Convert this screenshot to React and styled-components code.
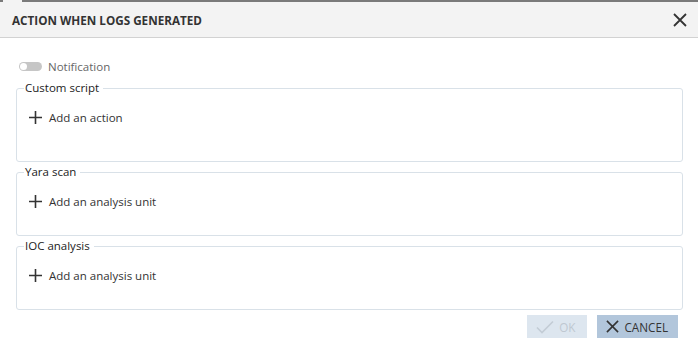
import React from "react";
import styled, { createGlobalStyle } from "styled-components";

const Global = createGlobalStyle`
  html, body { margin: 0; padding: 0; background: #fff; }
  body { font-family: "Open Sans", "Noto Sans", Arial, sans-serif; }
  #root { width: 698px; height: 360px; }
`;

const Dialog = styled.div`
  width: 698px;
  height: 360px;
  display: flex;
  flex-direction: column;
  background: #fff;
  box-sizing: border-box;
`;

const TopEdge = styled.div`
  display: flex;
  height: 2px;
  background: #f3f3f3;
`;

const EdgeSeg = styled.div`
  height: 2px;
  background: #7a7a7a;
  width: ${(p) => (p.$w ? `${p.$w}px` : "auto")};
  flex: ${(p) => (p.$w ? "none" : "1")};
  margin-left: ${(p) => p.$ml || 0}px;
`;

const Header = styled.div`
  height: 35px;
  background: #f3f3f3;
  border-bottom: 1px solid #d2d2d2;
  display: flex;
  align-items: center;
  justify-content: space-between;
  padding: 0 10px 0 12px;
`;

const Title = styled.div`
  font-size: 11.7px;
  font-weight: 700;
  color: #333;
`;

const Close = styled.button`
  border: 0;
  background: transparent;
  padding: 0;
  width: 16px;
  height: 16px;
  display: flex;
  align-items: center;
  justify-content: center;
  cursor: pointer;
`;

const Body = styled.div`
  display: flex;
  flex-direction: column;
  padding: 20px 16px 0 16px;
`;

const ToggleRow = styled.div`
  display: flex;
  align-items: center;
  gap: 6px;
  padding-left: 3px;
  height: 16px;
  font-size: 11.5px;
  color: #666;
`;

const Toggle = styled.div`
  width: 23px;
  height: 9px;
  border-radius: 5px;
  background: #c6c6c6;
  display: flex;
  align-items: center;
  padding-left: 1px;
  box-sizing: border-box;
`;

const Knob = styled.div`
  width: 7px;
  height: 7px;
  border-radius: 50%;
  background: #fff;
`;

const Group = styled.fieldset`
  margin: ${(p) => p.$mt}px 0 0 0;
  padding: 0 0 ${(p) => p.$pb}px 12px;
  border: 1px solid #d9e1e8;
  border-radius: 3px;
  box-sizing: border-box;
  width: 667px;
  min-width: 0;
`;

const Legend = styled.legend`
  font-size: 11.5px;
  color: #222;
  padding: 0 4px 0 1px;
  margin-left: -5px;
  line-height: 14px;
`;

const AddRow = styled.div`
  display: flex;
  align-items: center;
  gap: 7px;
  height: 17px;
  margin-top: 14px;
  font-size: 11.5px;
  color: #333;
  cursor: pointer;
`;

const Footer = styled.div`
  display: flex;
  justify-content: flex-end;
  gap: 10px;
  padding: 5px 20px 0 0;
`;

const Btn = styled.button`
  height: 23px;
  border: 0;
  border-radius: 0;
  display: flex;
  align-items: center;
  gap: 5px;
  padding: 0 ${(p) => p.$pr}px 0 ${(p) => p.$pl}px;
  font-family: inherit;
  font-size: 11.7px;
  background: ${(p) => (p.$disabled ? "#dde6ef" : "#b2c6db")};
  color: ${(p) => (p.$disabled ? "#bfc8d1" : "#333")};
  cursor: ${(p) => (p.$disabled ? "default" : "pointer")};
`;

const XIcon = ({ size = 14, color = "#333", sw = 1.8 }) => (
  <svg width={size} height={size} viewBox="0 0 14 14">
    <path d="M1 1 L13 13 M13 1 L1 13" stroke={color} strokeWidth={sw} fill="none" />
  </svg>
);

const PlusIcon = () => (
  <svg width="13" height="13" viewBox="0 0 13 13">
    <path d="M6.5 0 V13 M0 6.5 H13" stroke="#333" strokeWidth="1.6" fill="none" />
  </svg>
);

const CheckIcon = () => (
  <svg width="18" height="14" viewBox="0 0 18 14">
    <path d="M1 7.5 L6 12.5 L17 1.5" stroke="#c3ccd5" strokeWidth="1.6" fill="none" />
  </svg>
);

const groups = [
  { label: "Custom script", action: "Add an action", pb: 35, mt: 7 },
  { label: "Yara scan", action: "Add an analysis unit", pb: 25, mt: 3 },
  { label: "IOC analysis", action: "Add an analysis unit", pb: 25, mt: 3 },
];

export default function App() {
  return (
    <>
      <Global />
      <Dialog>
        <TopEdge>
          <EdgeSeg $w={3} />
          <EdgeSeg $ml={19} />
        </TopEdge>
        <Header>
          <Title>ACTION WHEN LOGS GENERATED</Title>
          <Close aria-label="Close">
            <XIcon size={14} color="#333" sw={1.8} />
          </Close>
        </Header>
        <Body>
          <ToggleRow>
            <Toggle>
              <Knob />
            </Toggle>
            Notification
          </ToggleRow>
          {groups.map((g) => (
            <Group key={g.label} $pb={g.pb} $mt={g.mt}>
              <Legend>{g.label}</Legend>
              <AddRow>
                <PlusIcon />
                {g.action}
              </AddRow>
            </Group>
          ))}
        </Body>
        <Footer>
          <Btn $disabled $pl={9} $pr={12}>
            <CheckIcon />
            OK
          </Btn>
          <Btn $pl={9} $pr={10}>
            <XIcon size={13} color="#333" sw={1.7} />
            CANCEL
          </Btn>
        </Footer>
      </Dialog>
    </>
  );
}
